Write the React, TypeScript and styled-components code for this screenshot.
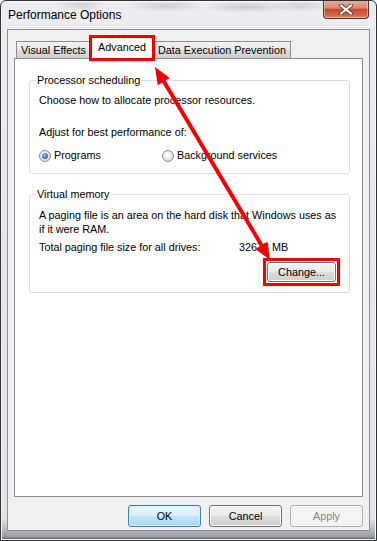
import styled, { createGlobalStyle } from 'styled-components';

const GlobalStyle = createGlobalStyle`
  html, body {
    margin: 0;
    padding: 0;
    background: #ffffff;
  }
  body {
    font-family: "Segoe UI", "Liberation Sans", Arial, sans-serif;
    color: #000000;
  }
`;

const Window = styled.div`
  position: relative;
  box-sizing: border-box;
  width: 377px;
  height: 541px;
  display: flex;
  flex-direction: column;
  padding: 0 6px 9px 6px;
  border: 1px solid #2e3236;
  border-radius: 6px 6px 0 0;
  background:
    radial-gradient(ellipse 26px 6px at 80px 4px, rgba(80, 80, 80, 0.18), transparent),
    radial-gradient(ellipse 40px 6px at 165px 5px, rgba(80, 80, 80, 0.2), transparent),
    radial-gradient(ellipse 45px 6px at 245px 6px, rgba(80, 80, 80, 0.22), transparent),
    radial-gradient(ellipse 30px 6px at 300px 5px, rgba(80, 80, 80, 0.18), transparent),
    linear-gradient(#eceef1, #e6e8eb 40%, #e2e4e7 96%, #8e9092);
  box-shadow: inset 0 0 0 1px #f8f9fa, inset 0 -2px 2px rgba(0, 0, 0, 0.4);
  overflow: hidden;
`;

const TitleBar = styled.div`
  height: 28px;
  display: flex;
  align-items: flex-start;
  padding-left: 1px;
`;

const Title = styled.div`
  margin-top: 7px;
  font-size: 12px;
  line-height: 15px;
`;

const CloseButton = styled.div`
  margin-left: auto;
  margin-right: 1px;
  margin-top: -1px;
  width: 46px;
  height: 19px;
  box-sizing: border-box;
  display: flex;
  align-items: center;
  justify-content: center;
  border: 1px solid #6b2c22;
  border-top: none;
  border-radius: 0 0 4px 4px;
  background: linear-gradient(#eab0a2, #dc8670 45%, #c9472c 52%, #d3674b 85%, #e08b70);
  box-shadow: inset 0 0 0 1px rgba(255, 220, 210, 0.5);
`;

const Client = styled.div`
  flex: 1;
  min-height: 0;
  display: flex;
  flex-direction: column;
  border: 1px solid #8a9096;
  background: #f0f0f0;
  padding: 6px 6px 3px 6px;
`;

const TabRow = styled.div`
  display: flex;
  align-items: flex-end;
  padding-left: 2px;
  height: 22px;
`;

// red marker box drawn over a control, as in the annotated screenshot
const marker = (inset: number) => `
  &::after {
    content: "";
    position: absolute;
    left: -${inset}px;
    right: -${inset}px;
    top: -${inset}px;
    bottom: -${inset}px;
    border: 3px solid #f20000;
    pointer-events: none;
  }
`;

const Tab = styled.div<{ $active?: boolean; $marked?: boolean }>`
  position: relative;
  box-sizing: border-box;
  display: flex;
  align-items: center;
  font-size: 10.8px;
  line-height: 14px;
  border: 1px solid #898c95;
  border-bottom: none;
  margin-right: -1px;
  padding: 0 4px;
  height: 17px;
  background: linear-gradient(#f2f2f2, #ebebeb 50%, #dddddd 50%, #cfcfcf);
  white-space: nowrap;

  ${(p) =>
    p.$active &&
    `
    z-index: 2;
    height: 23px;
    margin: 0 -1px -1px 0;
    padding: 0 7px 2px 7px;
    background: #ffffff;
  `}

  ${(p) => p.$marked && marker(2)}
`;

const TabPanel = styled.div`
  flex: 1;
  display: flex;
  flex-direction: column;
  gap: 13px;
  background: #ffffff;
  border: 1px solid #898c95;
  padding: 14px 12px 0 14px;
`;

const Group = styled.fieldset`
  margin: 0;
  display: flex;
  flex-direction: column;
  border: 1px solid #d5dfe5;
  border-radius: 3px;
  padding: 0 9px 10px 9px;
  font-size: 10.8px;
`;

const Legend = styled.legend`
  padding: 0 1px;
  margin-left: -3px;
  line-height: 15px;
`;

const Line = styled.div<{ $top: number }>`
  margin-top: ${(p) => p.$top}px;
  line-height: 15px;
`;

const Paragraph = styled.div`
  margin-top: 6px;
  line-height: 14px;
`;

const RadioRow = styled.div`
  margin-top: 8px;
  display: grid;
  grid-template-columns: 123px auto;
  line-height: 15px;
`;

const RadioLabel = styled.label`
  display: flex;
  align-items: center;
  gap: 3px;
`;

const RadioDot = styled.span<{ $checked?: boolean }>`
  position: relative;
  box-sizing: border-box;
  width: 12px;
  height: 12px;
  border-radius: 50%;
  border: 1px solid #8a8c8e;
  background: radial-gradient(circle at 40% 35%, #ffffff, #e4e4e4 60%, #cfcfcf);

  ${(p) =>
    p.$checked &&
    `
    &::after {
      content: "";
      position: absolute;
      left: 2px;
      top: 2px;
      width: 6px;
      height: 6px;
      border-radius: 50%;
      background: radial-gradient(circle at 40% 35%, #8fd0f5, #2a7fc0 55%, #134b7c);
    }
  `}
`;

const SizeRow = styled.div`
  margin-top: 4px;
  display: grid;
  grid-template-columns: 200px auto;
  line-height: 14px;
`;

const Button = styled.button<{ $variant?: 'default' | 'disabled'; $marked?: boolean }>`
  position: relative;
  box-sizing: border-box;
  width: 73px;
  height: 22px;
  padding: 0;
  font-family: inherit;
  font-size: 10.8px;
  color: #000000;
  border: 1px solid #707070;
  border-radius: 3px;
  background: linear-gradient(#f2f2f2, #ebebeb 50%, #dddddd 50%, #cfcfcf);
  box-shadow: inset 0 0 0 1px #fcfcfc;

  ${(p) =>
    p.$variant === 'default' &&
    `
    border-color: #3c7fb1;
    background: linear-gradient(#eaf6fd, #d9f0fc 50%, #bee6fd 50%, #a7d9f5);
    box-shadow: inset 0 0 0 1px #d4eefc;
  `}

  ${(p) =>
    p.$variant === 'disabled' &&
    `
    border-color: #adb2b5;
    background: #f4f4f4;
    color: #838383;
    box-shadow: none;
  `}

  ${(p) => p.$marked && marker(5)}
`;

const ChangeButton = styled(Button)`
  width: 69px;
  height: 20px;
  margin-top: 8px;
  margin-right: 4px;
  align-self: flex-end;
`;

const ButtonRow = styled.div`
  display: flex;
  justify-content: flex-end;
  gap: 8px;
  margin-top: 8px;
`;

const Annotation = styled.svg`
  position: absolute;
  left: -1px;
  top: -1px;
  width: 377px;
  height: 541px;
  pointer-events: none;
  z-index: 5;
`;

export default function App() {
  return (
    <>
      <GlobalStyle />
      <Window>
        <TitleBar>
          <Title>Performance Options</Title>
          <CloseButton>
            <svg width="14" height="11" viewBox="0 0 14 11">
              <path d="M2 1.5 L12 9.5 M12 1.5 L2 9.5" stroke="#4a4a4a" strokeWidth="4" strokeLinecap="round" />
              <path d="M2 1.5 L12 9.5 M12 1.5 L2 9.5" stroke="#ffffff" strokeWidth="2.2" strokeLinecap="round" />
            </svg>
          </CloseButton>
        </TitleBar>
        <Client>
          <TabRow>
            <Tab>Visual Effects</Tab>
            <Tab $active $marked>Advanced</Tab>
            <Tab>Data Execution Prevention</Tab>
          </TabRow>
          <TabPanel>
            <Group>
              <Legend>Processor scheduling</Legend>
              <Line $top={5}>Choose how to allocate processor resources.</Line>
              <Line $top={17}>Adjust for best performance of:</Line>
              <RadioRow>
                <RadioLabel>
                  <RadioDot $checked />
                  Programs
                </RadioLabel>
                <RadioLabel>
                  <RadioDot />
                  Background services
                </RadioLabel>
              </RadioRow>
            </Group>
            <Group>
              <Legend>Virtual memory</Legend>
              <Paragraph>
                A paging file is an area on the hard disk that Windows uses as
                <br />
                if it were RAM.
              </Paragraph>
              <SizeRow>
                <span>Total paging file size for all drives:</span>
                <span>32673 MB</span>
              </SizeRow>
              <ChangeButton $marked>Change...</ChangeButton>
            </Group>
          </TabPanel>
          <ButtonRow>
            <Button $variant="default">OK</Button>
            <Button>Cancel</Button>
            <Button $variant="disabled">Apply</Button>
          </ButtonRow>
        </Client>
        <Annotation viewBox="0 0 377 541">
          <line x1="163" y1="80" x2="262" y2="246" stroke="#f20000" strokeWidth="4" />
          <polygon points="155,67 169.7,78 157.7,85.2" fill="#f20000" />
          <polygon points="270,260 267.3,241.8 255.3,249" fill="#f20000" />
        </Annotation>
      </Window>
    </>
  );
}
